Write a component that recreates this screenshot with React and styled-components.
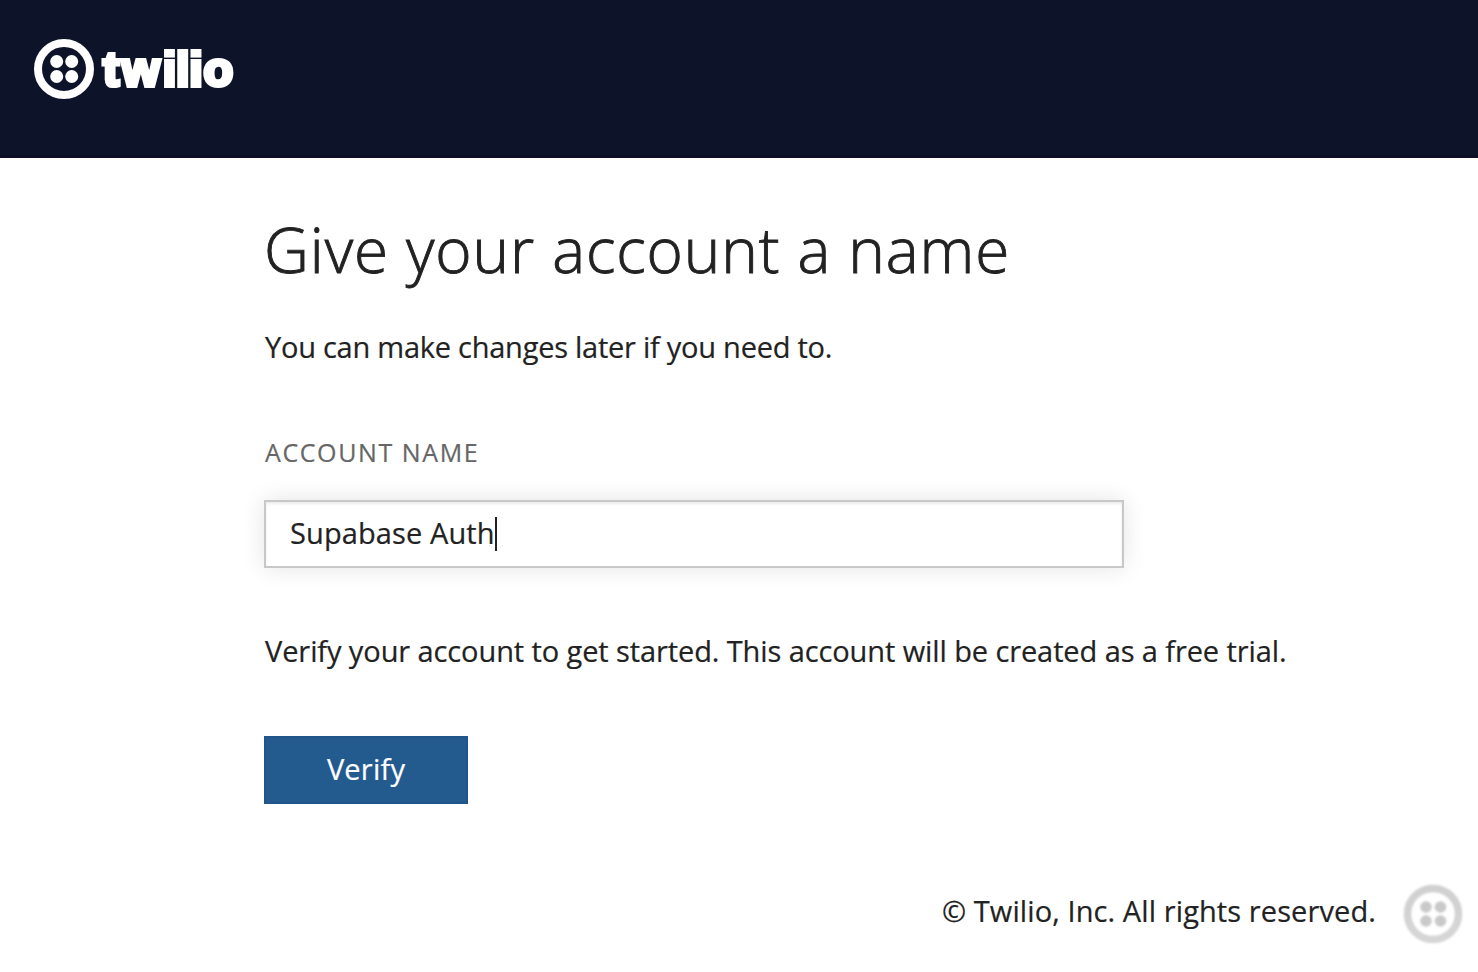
import React from "react";
import styled, { createGlobalStyle } from "styled-components";

const GlobalStyle = createGlobalStyle`
  * { box-sizing: border-box; }
  body { margin: 0; background: #fff; color: #222; font-family: "Open Sans", sans-serif; }
`;

const Page = styled.div`
  height: 972px;
  display: flex;
  flex-direction: column;
  overflow: hidden;
`;

const Header = styled.header`
  height: 158px;
  flex: none;
  padding: 37px 32px;
  background: #0d1328;
  border-bottom: 3px solid #0e0f27;
`;

const Main = styled.main`
  flex: 1;
  padding-left: 264px;
  display: flex;
  flex-direction: column;
  align-items: flex-start;
`;

const Title = styled.h1`
  margin: 52px 0 0;
  font-size: 62px;
  line-height: 78px;
  font-weight: 300;
  letter-spacing: 0.9px;
  -webkit-text-stroke: 0.9px #222;
  white-space: nowrap;
`;

const Text = styled.p`
  margin: ${(p) => p.$top}px 0 0;
  padding-left: 1px;
  font-size: 29px;
  line-height: 40px;
  letter-spacing: ${(p) => p.$track}px;
  -webkit-text-stroke: 0.2px #222;
  white-space: nowrap;
`;

const Label = styled.label`
  margin-top: 69px;
  padding-left: 1px;
  font-size: 25px;
  line-height: 32px;
  letter-spacing: 1.6px;
  color: #666;
  -webkit-text-stroke: 0.2px #666;
`;

const Field = styled.div`
  margin-top: 32px;
  width: 860px;
  height: 68px;
  padding: 0 24px;
  display: flex;
  align-items: center;
  border: 2px solid #c8c8c8;
  background: #fff;
  box-shadow: 0 0 24px rgba(0, 0, 0, 0.11), inset 0 2px 3px rgba(0, 0, 0, 0.08);
`;

const Value = styled.span`
  padding-bottom: 3px;
  font-size: 29px;
  letter-spacing: 0.1px;
  -webkit-text-stroke: 0.2px #222;
`;

const Caret = styled.span`
  width: 2px;
  height: 34px;
  background: #222;
`;

const Button = styled.button`
  margin-top: 65px;
  width: 204px;
  height: 68px;
  padding: 0 0 3px;
  border: 2px solid #1f558a;
  background: #235b8f;
  color: #fff;
  font: 400 29px "Open Sans", sans-serif;
  letter-spacing: 0.2px;
  -webkit-text-stroke: 0.2px #fff;
`;

const Footer = styled.footer`
  flex: none;
  height: 92px;
  padding-right: 14px;
  display: flex;
  justify-content: flex-end;
  align-items: flex-start;
  gap: 26px;
`;

const BadgeSlot = styled.div`
  padding-top: 3px;
`;

const Logo = () => (
  <svg width="206" height="64" viewBox="0 0 206 64" role="img" aria-label="twilio">
    <circle cx="32" cy="32" r="26" fill="none" stroke="#fff" strokeWidth="8" />
    <g fill="#fff">
      <circle cx="24.7" cy="24.5" r="6.5" />
      <circle cx="39.7" cy="24.5" r="6.5" />
      <circle cx="24.7" cy="39.5" r="6.5" />
      <circle cx="39.7" cy="39.5" r="6.5" />
    </g>
    <text x="71 90 130.8 144 157.2 171.6" y="49.4" fill="#fff" stroke="#fff" strokeWidth="4.2" fontFamily="Liberation Sans" fontWeight="700" fontSize="48.5">twilio</text>
    {/* gaps between the stems and the dots of both i letters */}
    <g fill="#0d1328">
      <rect x="131" y="20.6" width="13" height="1.4" />
      <rect x="158" y="20.6" width="12.5" height="1.4" />
    </g>
  </svg>
);

const Badge = () => (
  <svg width="62" height="62" viewBox="0 0 62 62">
    <defs>
      <linearGradient id="ring" x1="0" y1="0" x2="0" y2="1">
        <stop offset="0" stopColor="#d0d0d0" />
        <stop offset="1" stopColor="#d6d6d6" />
      </linearGradient>
      <filter id="soft"><feGaussianBlur stdDeviation="0.9" /></filter>
    </defs>
    <g filter="url(#soft)">
      <circle cx="31" cy="31" r="25.5" fill="none" stroke="url(#ring)" strokeWidth="7.5" />
      <g fill="#c9c9c9">
        <circle cx="24" cy="24" r="5.8" />
        <circle cx="38.5" cy="24" r="5.8" />
        <circle cx="24" cy="38" r="5.8" />
        <circle cx="38.5" cy="38" r="5.8" />
      </g>
    </g>
  </svg>
);

export default function App() {
  return (
    <Page>
      <GlobalStyle />
      <Header><Logo /></Header>
      <Main>
        <Title>Give your account a name</Title>
        <Text $top={39} $track={-0.25}>You can make changes later if you need to.</Text>
        <Label>ACCOUNT NAME</Label>
        <Field><Value>Supabase Auth</Value><Caret /></Field>
        <Text $top={63} $track={-0.1}>Verify your account to get started. This account will be created as a free trial.</Text>
        <Button>Verify</Button>
      </Main>
      <Footer>
        <Text $top={11} $track={0.1}>© Twilio, Inc. All rights reserved.</Text>
        <BadgeSlot><Badge /></BadgeSlot>
      </Footer>
    </Page>
  );
}
